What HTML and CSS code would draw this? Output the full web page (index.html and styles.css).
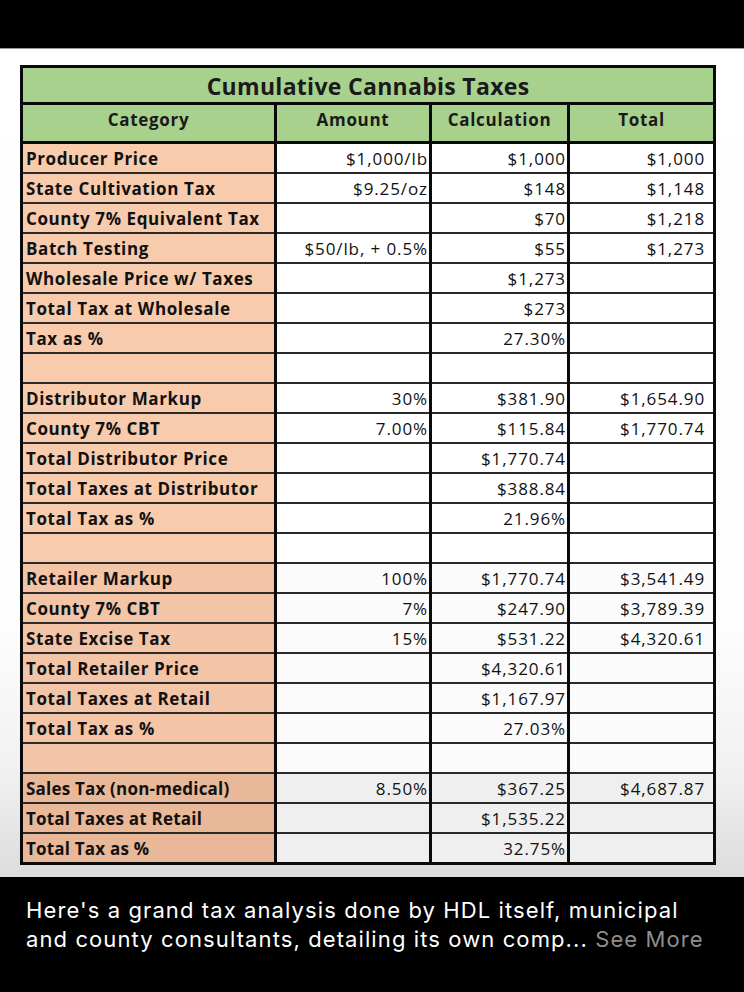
FILE: index.html
```html
<!DOCTYPE html>
<html>
<head>
<meta charset="utf-8">
<link rel="stylesheet" href="styles.css">
</head>
<body>
<div class="topbar"></div>
<div class="photo">
  <table class="taxes">
    <colgroup>
      <col class="c1"><col class="c2"><col class="c3"><col class="c4">
    </colgroup>
    <thead>
      <tr class="title"><th colspan="4">Cumulative Cannabis Taxes</th></tr>
      <tr class="head"><th>Category</th><th>Amount</th><th>Calculation</th><th>Total</th></tr>
    </thead>
    <tbody>
      <tr><td class="lab">Producer Price</td><td>$1,000/lb</td><td>$1,000</td><td>$1,000</td></tr>
      <tr><td class="lab">State Cultivation Tax</td><td>$9.25/oz</td><td>$148</td><td>$1,148</td></tr>
      <tr><td class="lab">County 7% Equivalent Tax</td><td></td><td>$70</td><td>$1,218</td></tr>
      <tr><td class="lab">Batch Testing</td><td>$50/lb, + 0.5%</td><td>$55</td><td>$1,273</td></tr>
      <tr><td class="lab">Wholesale Price w/ Taxes</td><td></td><td>$1,273</td><td></td></tr>
      <tr><td class="lab">Total Tax at Wholesale</td><td></td><td>$273</td><td></td></tr>
      <tr><td class="lab">Tax as %</td><td></td><td>27.30%</td><td></td></tr>
      <tr><td class="lab"></td><td></td><td></td><td></td></tr>
      <tr><td class="lab">Distributor Markup</td><td>30%</td><td>$381.90</td><td>$1,654.90</td></tr>
      <tr><td class="lab">County 7% CBT</td><td>7.00%</td><td>$115.84</td><td>$1,770.74</td></tr>
      <tr><td class="lab">Total Distributor Price</td><td></td><td>$1,770.74</td><td></td></tr>
      <tr><td class="lab">Total Taxes at Distributor</td><td></td><td>$388.84</td><td></td></tr>
      <tr><td class="lab">Total Tax as %</td><td></td><td>21.96%</td><td></td></tr>
      <tr><td class="lab"></td><td></td><td></td><td></td></tr>
      <tr><td class="lab">Retailer Markup</td><td>100%</td><td>$1,770.74</td><td>$3,541.49</td></tr>
      <tr><td class="lab">County 7% CBT</td><td>7%</td><td>$247.90</td><td>$3,789.39</td></tr>
      <tr><td class="lab">State Excise Tax</td><td>15%</td><td>$531.22</td><td>$4,320.61</td></tr>
      <tr><td class="lab">Total Retailer Price</td><td></td><td>$4,320.61</td><td></td></tr>
      <tr><td class="lab">Total Taxes at Retail</td><td></td><td>$1,167.97</td><td></td></tr>
      <tr><td class="lab">Total Tax as %</td><td></td><td>27.03%</td><td></td></tr>
      <tr><td class="lab"></td><td></td><td></td><td></td></tr>
      <tr class="narrow"><td class="lab">Sales Tax (non-medical)</td><td>8.50%</td><td>$367.25</td><td>$4,687.87</td></tr>
      <tr class="narrow"><td class="lab">Total Taxes at Retail</td><td></td><td>$1,535.22</td><td></td></tr>
      <tr class="narrow"><td class="lab">Total Tax as %</td><td></td><td>32.75%</td><td></td></tr>
    </tbody>
  </table>
</div>
<div class="caption">
  <p class="text">Here's a grand tax analysis done by HDL itself, municipal and county consultants, detailing its own comp... <span class="more">See More</span></p>
  <p class="stats">0 Likes 0 Comments</p>
</div>
</body>
</html>
```

FILE: styles.css
```css
html, body {
  margin: 0;
  padding: 0;
  background: #000;
  width: 744px;
  height: 992px;
  overflow: hidden;
}

.topbar {
  height: 48px;
  background: #000;
}

.photo {
  height: 829px;
  box-sizing: border-box;
  border-top: 1px solid #9a9a9a;
  padding: 16px 0 0 20px;
  background: linear-gradient(to bottom, #ffffff 0%, #fdfdfd 70%, #f0f0f0 88%, #dcdcdc 100%);
}

.taxes {
  border-collapse: collapse;
  table-layout: fixed;
  width: 693px;
  font-family: "Open Sans", Lato, sans-serif;
  color: #111;
  border: 3px solid #0a0a0a;
}

.c1 { width: 254px; }
.c2 { width: 155px; }
.c3 { width: 138px; }
.c4 { width: 146px; }

.taxes th {
  background: #a9d18e;
  font-weight: 700;
  font-size: 17px;
  border: 3px solid #0a0a0a;
  padding: 0;
  text-align: center;
  color: #1a1a1a;
  letter-spacing: 0.7px;
}

.title th {
  height: 31px;
  font-size: 23px;
  padding-top: 2px;
  letter-spacing: 0.3px;
}

.head th {
  height: 28px;
  padding-bottom: 8px;
}

.taxes td {
  height: 28px;
  padding: 0 1px 0 3px;
  font-size: 17px;
  text-align: right;
  white-space: nowrap;
  background: #fff;
  border-top: 2px solid #2a2a2a;
  border-bottom: 2px solid #2a2a2a;
  border-left: 3px solid #0a0a0a;
  border-right: 3px solid #0a0a0a;
  letter-spacing: 0.9px;
}

.taxes td:nth-child(4) {
  padding-right: 8px;
}

.taxes td.lab {
  text-align: left;
  font-weight: 700;
  background: #f8cbad;
  letter-spacing: 0.6px;
}

.taxes tr:nth-child(n+15) td { background: #fbfbfb; }
.taxes tr:nth-child(n+15) td.lab { background: #f3c4a5; }
.taxes tr.narrow td { background: #efefef; }
.taxes tr.narrow td.lab {
  background: #e8b898;
  letter-spacing: 0.2px;
}

.caption {
  padding: 19px 26px 0 26px;
  font-family: Inter, Roboto, "Liberation Sans", sans-serif;
  color: #fff;
}

.caption .text {
  margin: 0;
  font-size: 22px;
  line-height: 29px;
  letter-spacing: 1.1px;
}

.caption .more {
  color: #8e8e8e;
}

.caption .stats {
  margin: 34px 0 0 0;
  font-size: 20px;
  line-height: 24px;
  color: #c8c8c8;
  letter-spacing: 1px;
}
```
